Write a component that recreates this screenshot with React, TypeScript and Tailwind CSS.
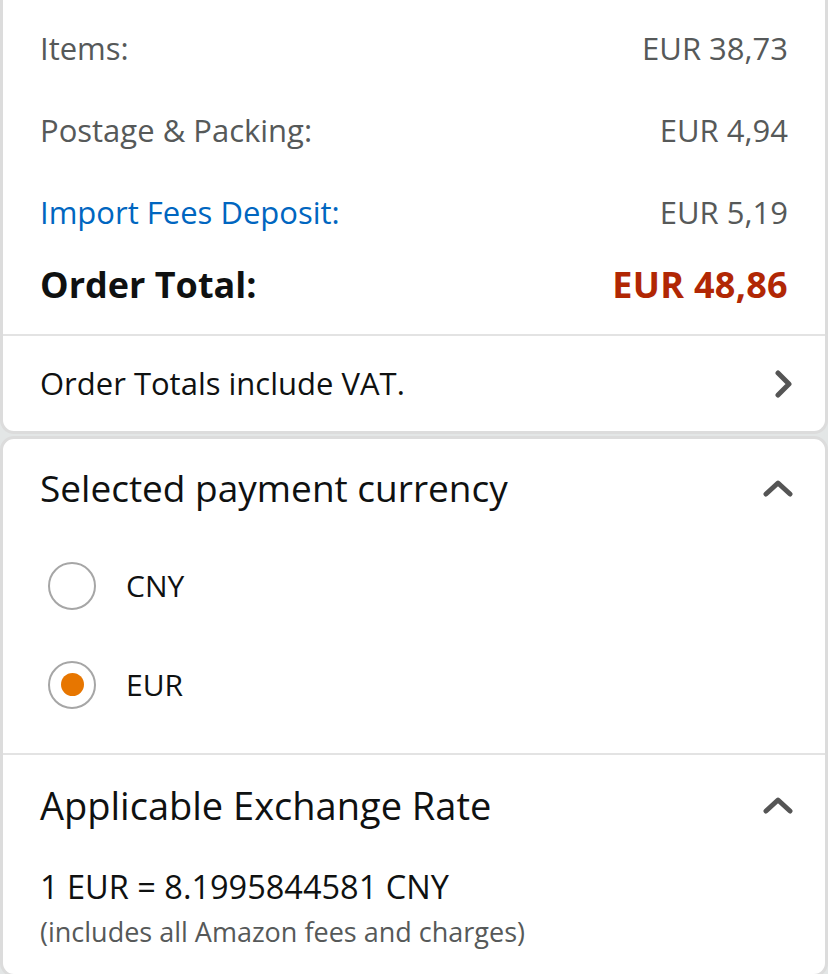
const font = { fontFamily: '"Open Sans", "Noto Sans", sans-serif' }

function ChevRight() {
  return (
    <svg width="20" height="28" viewBox="0 0 20 28" className="text-[#555]">
      <polyline points="4,3 15,14 4,25" fill="none" stroke="currentColor" strokeWidth="5" strokeLinecap="round" strokeLinejoin="round" />
    </svg>
  )
}

function ChevUp() {
  return (
    <svg width="30" height="18" viewBox="0 0 30 18" className="text-[#555]">
      <polyline points="3,15 15,4 27,15" fill="none" stroke="currentColor" strokeWidth="5" strokeLinecap="round" strokeLinejoin="round" />
    </svg>
  )
}

function Row({ label, value, labelClass = 'text-[#565959]' }: { label: string; value: string; labelClass?: string }) {
  return (
    <div className="flex items-center justify-between h-[82px] text-[31px]">
      <span className={labelClass}>{label}</span>
      <span className="text-[#565959]">{value}</span>
    </div>
  )
}

function Radio({ label, checked }: { label: string; checked?: boolean }) {
  return (
    <div className="flex items-center h-[99px]">
      <div className="w-[48px] h-[48px] ml-[8px] rounded-full border-[2px] border-[#a6a6a6] flex items-center justify-center">
        {checked && <div className="w-[23px] h-[23px] rounded-full bg-[#e77600]" />}
      </div>
      <span className="ml-[30px] text-[30px] text-[#0f1111]">{label}</span>
    </div>
  )
}

export default function App() {
  return (
    <div className="bg-[#e3e6e6] w-[828px] h-[974px] overflow-hidden" style={font}>
      <div className="bg-white border-x-[3px] border-b-[3px] border-[#dcdcdc] rounded-b-[14px]">
        <div className="px-[37px] pt-[7px] pb-[17px]">
          <Row label="Items:" value="EUR 38,73" />
          <Row label="Postage & Packing:" value="EUR 4,94" />
          <Row label="Import Fees Deposit:" value="EUR 5,19" labelClass="text-[#0066c0]" />
          <div className="flex items-center justify-between h-[64px] text-[36px] font-bold">
            <span className="text-[#0f1111]">Order Total:</span>
            <span className="text-[#b12704] tracking-[0.3px]">EUR 48,86</span>
          </div>
        </div>
        <div className="h-[2px] bg-[#e3e3e3]" />
        <div className="flex items-center justify-between h-[95px] pl-[37px] pr-[31px]">
          <span className="text-[31px] text-[#0f1111]">Order Totals include VAT.</span>
          <ChevRight />
        </div>
      </div>

      <div className="mt-[2px] bg-white border-[3px] border-[#dcdcdc] rounded-[14px]">
        <div className="flex items-center justify-between h-[97px] pl-[37px] pr-[32px]">
          <span className="text-[37px] text-[#0f1111]">Selected payment currency</span>
          <ChevUp />
        </div>
        <div className="px-[37px] pb-[19px]">
          <Radio label="CNY" />
          <Radio label="EUR" checked />
        </div>
        <div className="h-[2px] bg-[#e3e3e3]" />
        <div className="flex items-center justify-between h-[100px] pl-[37px] pr-[32px]">
          <span className="text-[38px] text-[#0f1111]">Applicable Exchange Rate</span>
          <ChevUp />
        </div>
        <div className="px-[37px] pb-[22px]">
          <div className="text-[32.5px] text-[#0f1111] leading-[40px] mt-[12px]">1 EUR = 8.1995844581 CNY</div>
          <div className="text-[27px] text-[#565959] leading-[40px] mt-[5px]">(includes all Amazon fees and charges)</div>
        </div>
      </div>
    </div>
  )
}
